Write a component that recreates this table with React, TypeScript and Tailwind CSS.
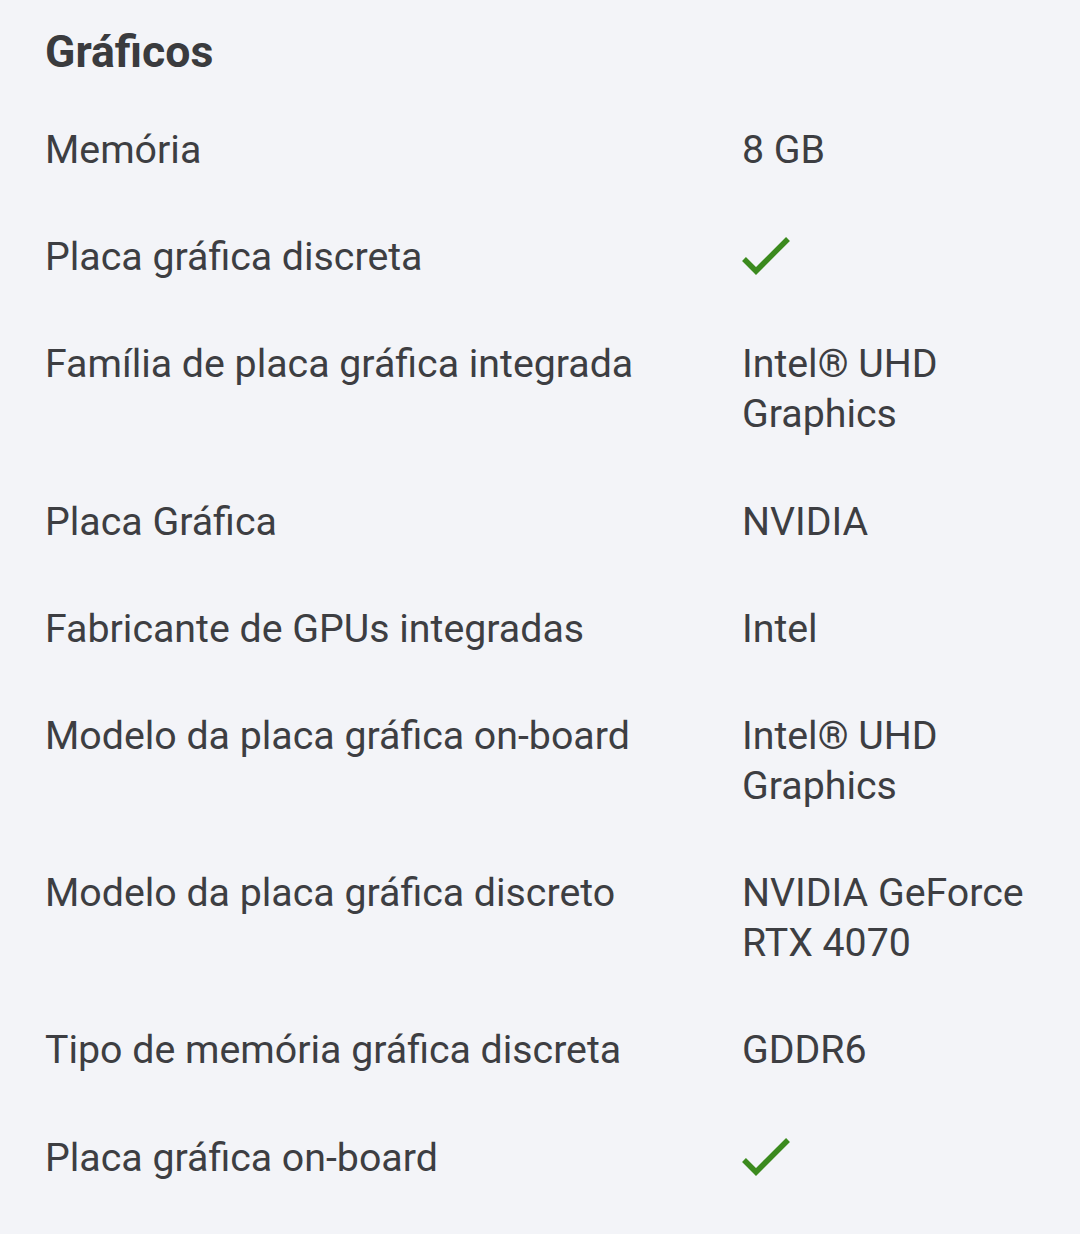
import React from "react";

type Row = { label: string; value?: string[]; check?: boolean };

const rows: Row[] = [
  { label: "Memória", value: ["8 GB"] },
  { label: "Placa gráfica discreta", check: true },
  { label: "Família de placa gráfica integrada", value: ["Intel® UHD", "Graphics"] },
  { label: "Placa Gráfica", value: ["NVIDIA"] },
  { label: "Fabricante de GPUs integradas", value: ["Intel"] },
  { label: "Modelo da placa gráfica on-board", value: ["Intel® UHD", "Graphics"] },
  { label: "Modelo da placa gráfica discreto", value: ["NVIDIA GeForce", "RTX 4070"] },
  { label: "Tipo de memória gráfica discreta", value: ["GDDR6"] },
  { label: "Placa gráfica on-board", check: true },
];

function Check() {
  return (
    <svg width="50" height="50" viewBox="0 0 50 50" className="block">
      <polyline
        points="2,21 14,33 46,1"
        fill="none"
        stroke="#3b8a1e"
        strokeWidth="5.5"
        strokeLinecap="butt"
        strokeLinejoin="miter"
        transform="translate(0,6)"
      />
    </svg>
  );
}

export default function App() {
  return (
    <div
      className="min-h-[1234px] w-[1080px] bg-[#f3f4f8] pl-[45px] pr-[46px] pt-[24px] text-[#3d3e42]"
      style={{ fontFamily: "Roboto, 'Liberation Sans', sans-serif" }}
    >
      <h2 className="text-[44.6px] font-bold leading-[56px] text-[#3a3b3e]">Gráficos</h2>
      <div className="mt-[16px]">
        {rows.map((r, i) => (
          <div key={i} className="grid grid-cols-[697px_1fr] pt-[29px] pb-[28.2px] text-[39.3px] leading-[50px]">
            <div>{r.label}</div>
            <div>
              {r.check ? (
                <Check />
              ) : (
                r.value!.map((v, j) => <div key={j}>{v}</div>)
              )}
            </div>
          </div>
        ))}
      </div>
    </div>
  );
}
